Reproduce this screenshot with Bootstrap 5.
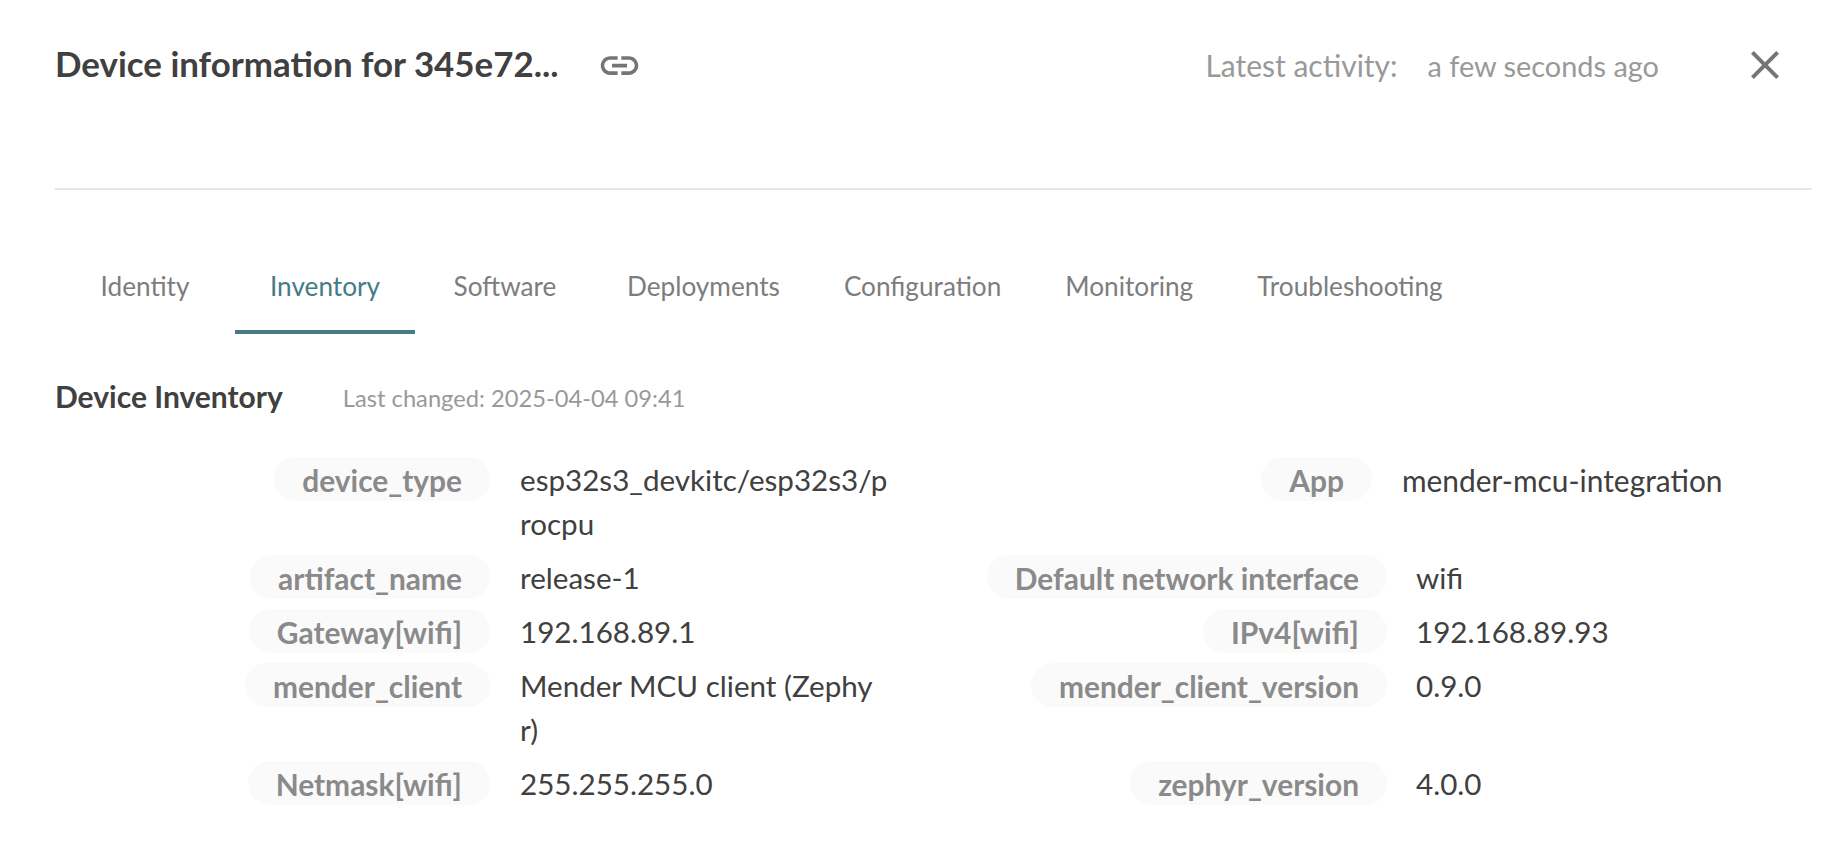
<!DOCTYPE html>
<html lang="en"><head><meta charset="utf-8"><title>Device information</title>
<link href="https://cdn.jsdelivr.net/npm/bootstrap@5.3.0/dist/css/bootstrap.min.css" rel="stylesheet">
<style>
html,body{height:100%;overflow:hidden}
body{font-family:Lato,"Liberation Sans",sans-serif;background:#fff;color:#3f3f3f}
.drawer{padding:30px 34px 0 55px}
.head-bar{height:70px;position:relative}
.dev-title{font-size:34.9px;font-weight:700;color:#404040;margin:0;line-height:70px;margin-top:-2px}
.link-ic{width:45px;height:45px;fill:#757575;margin-left:38px}
.activity{font-size:30px;color:#999;margin-left:auto;margin-right:153px}
.activity span+span{margin-left:30px;font-size:28.9px}
.close-ic{width:48px;height:48px;fill:#757575;position:absolute;right:23px;top:11px}
.head-rule{height:2px;background:#e6e6e6;margin-top:88px}
.tabs-bar{margin-top:50px;height:94px}
.tab-it{min-width:180px;padding:3px 32px 0;height:94px;font-size:26.2px;color:#7d7d7d;display:flex;align-items:center;justify-content:center;text-decoration:none;border-bottom:4px solid transparent}
.tab-it.on{color:#457b88;border-bottom-color:#457b88}
.sec-head{margin-top:41px;height:42px}
.sec-title{font-size:30px;font-weight:700;color:#404040;margin:0}
.changed{font-size:23.7px;color:#999;margin-left:60px;margin-top:6px}
.inv-grid{display:grid;grid-template-columns:890px 867px;row-gap:10px;margin-top:40px}
.inv-cell{display:flex;align-items:flex-start}
.key-box{width:435px;display:flex;justify-content:flex-end;flex:none}
.right .key-box{width:442px}
.key-box.short{width:427px}
.key-pill{background:#fafafa;border-radius:22px;padding:0 28px;height:44px;line-height:46px;font-size:29.9px;font-weight:700;color:#8a8a8a;white-space:nowrap}
.val{margin:1px 0 -1px 30px;font-size:29.6px;line-height:44px;color:#404040;word-break:break-all;width:361px}
.val.wide{width:372px}
.right .val{margin-left:29px;width:auto}
.right .key-box.short+.val{margin-left:30px;font-size:29.9px}
</style></head>
<body>
<div class="drawer">
  <div class="head-bar d-flex align-items-center">
    <h1 class="dev-title">Device information for 345e72...</h1>
    <svg class="link-ic" viewBox="0 0 24 24"><path d="M3.9 12c0-1.71 1.39-3.1 3.1-3.1h4V7H7c-2.76 0-5 2.24-5 5s2.24 5 5 5h4v-1.9H7c-1.71 0-3.1-1.39-3.1-3.1zM8 13h8v-2H8v2zm9-6h-4v1.9h4c1.71 0 3.1 1.39 3.1 3.1s-1.39 3.1-3.1 3.1h-4V17h4c2.76 0 5-2.24 5-5s-2.24-5-5-5z"/></svg>
    <div class="activity"><span>Latest activity:</span><span>a few seconds ago</span></div>
    <svg class="close-ic" viewBox="0 0 24 24"><path d="M19 6.41L17.59 5 12 10.59 6.41 5 5 6.41 10.59 12 5 17.59 6.41 19 12 13.41 17.59 19 19 17.59 13.41 12z"/></svg>
  </div>
  <div class="head-rule"></div>
  <nav class="tabs-bar d-flex">
    <a class="tab-it" href="#">Identity</a>
    <a class="tab-it on" href="#">Inventory</a>
    <a class="tab-it" href="#">Software</a>
    <a class="tab-it" href="#">Deployments</a>
    <a class="tab-it" href="#">Configuration</a>
    <a class="tab-it" href="#">Monitoring</a>
    <a class="tab-it" href="#">Troubleshooting</a>
  </nav>
  <div class="sec-head d-flex align-items-center">
    <h2 class="sec-title">Device Inventory</h2>
    <div class="changed">Last changed: 2025-04-04 09:41</div>
  </div>
  <div class="inv-grid">
    <div class="inv-cell"><div class="key-box"><div class="key-pill">device_type</div></div><div class="val wide">esp32s3_devkitc/esp32s3/p<wbr>rocpu</div></div>
    <div class="inv-cell right"><div class="key-box short"><div class="key-pill">App</div></div><div class="val">mender-mcu-integration</div></div>
    <div class="inv-cell"><div class="key-box"><div class="key-pill">artifact_name</div></div><div class="val">release-1</div></div>
    <div class="inv-cell right"><div class="key-box"><div class="key-pill">Default network interface</div></div><div class="val">wifi</div></div>
    <div class="inv-cell"><div class="key-box"><div class="key-pill">Gateway[wifi]</div></div><div class="val">192.168.89.1</div></div>
    <div class="inv-cell right"><div class="key-box"><div class="key-pill">IPv4[wifi]</div></div><div class="val">192.168.89.93</div></div>
    <div class="inv-cell"><div class="key-box"><div class="key-pill">mender_client</div></div><div class="val">Mender MCU client (Zephyr)</div></div>
    <div class="inv-cell right"><div class="key-box"><div class="key-pill">mender_client_version</div></div><div class="val">0.9.0</div></div>
    <div class="inv-cell"><div class="key-box"><div class="key-pill">Netmask[wifi]</div></div><div class="val">255.255.255.0</div></div>
    <div class="inv-cell right"><div class="key-box"><div class="key-pill">zephyr_version</div></div><div class="val">4.0.0</div></div>
  </div>
</div>
<script src="https://cdn.jsdelivr.net/npm/bootstrap@5.3.0/dist/js/bootstrap.bundle.min.js"></script>
</body></html>
